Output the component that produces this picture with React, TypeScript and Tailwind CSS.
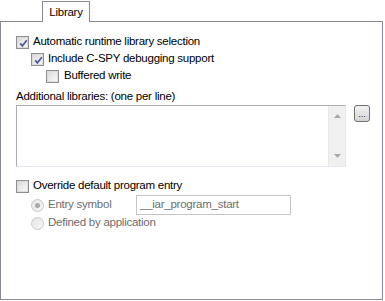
import * as React from 'react'

/* IAR-style "Library" options page, Win7 look */

function CheckBox({ checked }: { checked?: boolean }) {
  return (
    <span className="relative flex h-[13px] w-[13px] shrink-0 items-center justify-center border border-[#8e8f8f] bg-white">
      <span className="h-[11px] w-[11px] border border-[#dcdcdc] bg-gradient-to-br from-[#dcdcdc] to-[#f8f8f8]" />
      {checked && (
        <svg className="absolute left-[1px] top-[1px]" width="11" height="11" viewBox="0 0 11 11">
          <path d="M2.2 5.4 L4.4 7.8 L8.8 2.2" fill="none" stroke="#4a5f97" strokeWidth="1.8" />
        </svg>
      )}
    </span>
  )
}

function Radio({ selected }: { selected?: boolean }) {
  return (
    <span className="flex h-[13px] w-[13px] shrink-0 items-center justify-center rounded-full border border-[#c8c8c8] bg-gradient-to-br from-[#e6e6e6] to-[#f6f6f6]">
      {selected && <span className="h-[5px] w-[5px] rounded-full bg-[#a8a8a8]" />}
    </span>
  )
}

export default function App() {
  return (
    <div
      className="relative h-[301px] w-[385px] overflow-hidden bg-white text-[11.5px] tracking-[-0.25px] text-black"
      style={{ fontFamily: '"Liberation Sans", Arial, sans-serif' }}
    >
      {/* tab strip */}
      <div className="flex h-[21px] items-end">
        <div className="relative z-10 -mb-px ml-[42px] flex h-[21px] w-[48px] items-center justify-center border border-b-0 border-[#898c95] bg-white pt-[1px]">
          Library
        </div>
      </div>

      {/* page */}
      <div className="h-[279px] w-[383px] border border-[#898c95] pl-[15px]">
        <div className="mt-[12px] flex h-[16px] items-center gap-[4px]">
          <CheckBox checked />
          <span>Automatic runtime library selection</span>
        </div>
        <div className="ml-[15px] mt-px flex h-[16px] items-center gap-[4px]">
          <CheckBox checked />
          <span>Include C-SPY debugging support</span>
        </div>
        <div className="ml-[30px] mt-px flex h-[16px] items-center gap-[5px]">
          <CheckBox />
          <span>Buffered write</span>
        </div>

        <div className="mt-[4px] h-[16px] leading-[16px]">Additional libraries: (one per line)</div>

        <div className="mt-[1px] flex items-start">
          <div className="flex h-[62px] w-[330px] border border-[#abadb3] border-r-[#e3e9ef] border-b-[#e3e9ef] bg-white">
            <div className="flex-1" />
            <div className="flex w-[17px] flex-col items-center justify-between border-l border-[#e8e8e8] bg-[#f0f0f0] py-[8px]">
              <svg width="7" height="4" viewBox="0 0 7 4">
                <path d="M0 4 L3.5 0 L7 4 Z" fill="#a9a9a9" />
              </svg>
              <svg width="7" height="4" viewBox="0 0 7 4">
                <path d="M0 0 L7 0 L3.5 4 Z" fill="#a9a9a9" />
              </svg>
            </div>
          </div>
          <button
            type="button"
            className="ml-[8px] flex h-[17px] w-[16px] items-end justify-center rounded-[3px] border border-[#707070] bg-gradient-to-b from-[#f2f2f2] to-[#d4d4d4] pb-[3px] text-[9px] leading-[8px] tracking-normal text-[#333]"
          >
            ...
          </button>
        </div>

        <div className="mt-[11px] flex h-[16px] items-center gap-[4px]">
          <CheckBox />
          <span>Override default program entry</span>
        </div>

        <div className="ml-[15px] mt-[1px] flex h-[20px] items-center text-[#6d6d6d]">
          <Radio selected />
          <span className="ml-[4px] w-[88px]">Entry symbol</span>
          <div className="flex h-[20px] w-[155px] items-center border border-[#c5c5c5] bg-white px-[3px] text-[#6d6d6d]">
            __iar_program_start
          </div>
        </div>
        <div className="ml-[15px] flex h-[16px] items-center text-[#6d6d6d]">
          <Radio />
          <span className="ml-[4px]">Defined by application</span>
        </div>
      </div>
    </div>
  )
}
